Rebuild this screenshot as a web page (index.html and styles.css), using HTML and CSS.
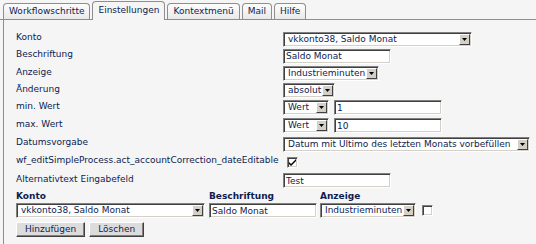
FILE: index.html
```html
<!DOCTYPE html>
<html>
<head>
<meta charset="utf-8">
<link rel="stylesheet" href="styles.css">
</head>
<body>
<div class="tabs">
  <div class="tab">Workflowschritte</div>
  <div class="tab active">Einstellungen</div>
  <div class="tab">Kontextmenü</div>
  <div class="tab">Mail</div>
  <div class="tab">Hilfe</div>
</div>
<div class="panel">
  <div class="form">
    <div class="label">Konto</div>
    <div class="ctl"><span class="sel w189"><span class="val">vkkonto38, Saldo Monat</span><span class="arr"><svg width="5" height="3" viewBox="0 0 5 3"><path d="M0 0h5L2.5 3z" fill="#000"/></svg></span></span></div>

    <div class="label">Beschriftung</div>
    <div class="ctl"><input class="txt" type="text" value="Saldo Monat"></div>

    <div class="label">Anzeige</div>
    <div class="ctl"><span class="sel w96"><span class="val">Industrieminuten</span><span class="arr"><svg width="5" height="3" viewBox="0 0 5 3"><path d="M0 0h5L2.5 3z" fill="#000"/></svg></span></span></div>

    <div class="label">Änderung</div>
    <div class="ctl"><span class="sel w52"><span class="val">absolut</span><span class="arr"><svg width="5" height="3" viewBox="0 0 5 3"><path d="M0 0h5L2.5 3z" fill="#000"/></svg></span></span></div>

    <div class="label">min. Wert</div>
    <div class="ctl pair"><span class="sel w46"><span class="val">Wert</span><span class="arr"><svg width="5" height="3" viewBox="0 0 5 3"><path d="M0 0h5L2.5 3z" fill="#000"/></svg></span></span><input class="txt" type="text" value="1"></div>

    <div class="label">max. Wert</div>
    <div class="ctl pair"><span class="sel w46"><span class="val">Wert</span><span class="arr"><svg width="5" height="3" viewBox="0 0 5 3"><path d="M0 0h5L2.5 3z" fill="#000"/></svg></span></span><input class="txt" type="text" value="10"></div>

    <div class="label">Datumsvorgabe</div>
    <div class="ctl"><span class="sel w247"><span class="val">Datum mit Ultimo des letzten Monats vorbefüllen</span><span class="arr"><svg width="5" height="3" viewBox="0 0 5 3"><path d="M0 0h5L2.5 3z" fill="#000"/></svg></span></span></div>

    <div class="label">wf_editSimpleProcess.act_accountCorrection_dateEditable</div>
    <div class="ctl"><span class="cb"><svg width="7" height="7" viewBox="0 0 7 7"><path d="M0 3l2 2 5-5v2l-5 5-2-2z" fill="#000"/></svg></span></div>

    <div class="label">Alternativtext Eingabefeld</div>
    <div class="ctl"><input class="txt" type="text" value="Test"></div>
  </div>

  <div class="list">
    <div class="head">Konto</div>
    <div class="head">Beschriftung</div>
    <div class="head">Anzeige</div>
    <div class="ctl"><span class="sel w189"><span class="val">vkkonto38, Saldo Monat</span><span class="arr"><svg width="5" height="3" viewBox="0 0 5 3"><path d="M0 0h5L2.5 3z" fill="#000"/></svg></span></span></div>
    <div class="ctl"><input class="txt" type="text" value="Saldo Monat"></div>
    <div class="ctl pair2"><span class="sel w96"><span class="val">Industrieminuten</span><span class="arr"><svg width="5" height="3" viewBox="0 0 5 3"><path d="M0 0h5L2.5 3z" fill="#000"/></svg></span></span><span class="cb"></span></div>
  </div>

  <div class="buttons">
    <button class="btn">Hinzufügen</button>
    <button class="btn">Löschen</button>
  </div>
</div>
</body>
</html>
```

FILE: styles.css
```css
html, body {
  margin: 0;
  padding: 0;
}
body {
  width: 536px;
  height: 244px;
  overflow: hidden;
  background: #f5f5f5;
  font-family: "DejaVu Sans", Verdana, sans-serif;
  font-size: 9px;
  color: #0e1c50;
}
.tabs {
  display: flex;
  align-items: flex-end;
  height: 19px;
  padding-left: 3px;
  gap: 2px;
  border-bottom: 1px solid #8e8e8e;
}
.tab {
  box-sizing: border-box;
  height: 16px;
  padding: 0 5px;
  line-height: 14px;
  border: 1px solid #8e8e8e;
  border-bottom: none;
  border-radius: 4px 4px 0 0;
  background: linear-gradient(#fdfdfd, #e9e9e9);
  color: #0e1c50;
  white-space: nowrap;
}
.tab.active {
  height: 19px;
  margin-bottom: -1px;
  line-height: 16px;
  background: #f5f5f5;
}
.panel {
  box-sizing: border-box;
  height: 224px;
  margin-left: 3px;
  border-left: 1px solid #8e8e8e;
  padding-left: 12px;
  padding-top: 11px;
}
.form {
  display: grid;
  grid-template-columns: 267px 1fr;
  grid-template-rows: 16px 18px 17px 17px 17px 19px 18px 18px 19px;
  align-items: center;
}
.label {
  line-height: 11px;
  margin-bottom: 3px;
  white-space: nowrap;
}
.ctl {
  display: flex;
  align-items: center;
}
.pair {
  gap: 5px;
}
.pair2 {
  gap: 6px;
}
.sel {
  box-sizing: border-box;
  display: inline-flex;
  align-items: center;
  height: 15px;
  background: #fff;
  border: 1px solid;
  border-color: #808080 #ffffff #ffffff #808080;
  box-shadow: inset 1px 1px 0 #404040, inset -1px -1px 0 #d4d0c8;
  padding: 1px;
}
.val {
  flex: 1;
  padding-left: 3px;
  white-space: nowrap;
  overflow: hidden;
  line-height: 11px;
  color: #0e1c50;
}
.arr {
  box-sizing: border-box;
  width: 11px;
  height: 11px;
  flex: none;
  background: #d4d0c8;
  border: 1px solid;
  border-color: #ffffff #404040 #404040 #ffffff;
  display: flex;
  align-items: center;
  justify-content: center;
}
.arr svg {
  display: block;
}
.w189 { width: 189px; }
.w96 { width: 96px; }
.w52 { width: 52px; }
.w46 { width: 46px; }
.w247 { width: 247px; }
.txt {
  box-sizing: border-box;
  width: 108px;
  height: 15px;
  margin: 0;
  padding: 0 2px;
  font-family: "DejaVu Sans", Verdana, sans-serif;
  font-size: 9px;
  color: #0e1c50;
  background: #fff;
  border: 1px solid;
  border-color: #808080 #ffffff #ffffff #808080;
  box-shadow: inset 1px 1px 0 #404040, inset -1px -1px 0 #d4d0c8;
  outline: none;
}
.cb {
  box-sizing: border-box;
  width: 11px;
  height: 11px;
  margin-left: 4px;
  background: #fff;
  border: 1px solid;
  border-color: #808080 #ffffff #ffffff #808080;
  box-shadow: inset 1px 1px 0 #404040, inset -1px -1px 0 #d4d0c8;
  display: flex;
  align-items: center;
  justify-content: center;
}
.pair2 .cb {
  margin-left: 0;
}
.list {
  display: grid;
  grid-template-columns: 193px 111px auto;
  grid-template-rows: 13px 15px;
  align-items: center;
}
.head {
  font-weight: bold;
  line-height: 11px;
}
.buttons {
  display: flex;
  gap: 4px;
  margin-top: 4px;
}
.btn {
  box-sizing: border-box;
  height: 15px;
  margin: 0;
  padding: 0 8px;
  font-family: "DejaVu Sans", Verdana, sans-serif;
  font-size: 9px;
  line-height: 11px;
  color: #0e1c50;
  background: #dcdcdc;
  border: 1px solid;
  border-color: #ffffff #404040 #404040 #ffffff;
  box-shadow: inset -1px -1px 0 #808080;
}
```
